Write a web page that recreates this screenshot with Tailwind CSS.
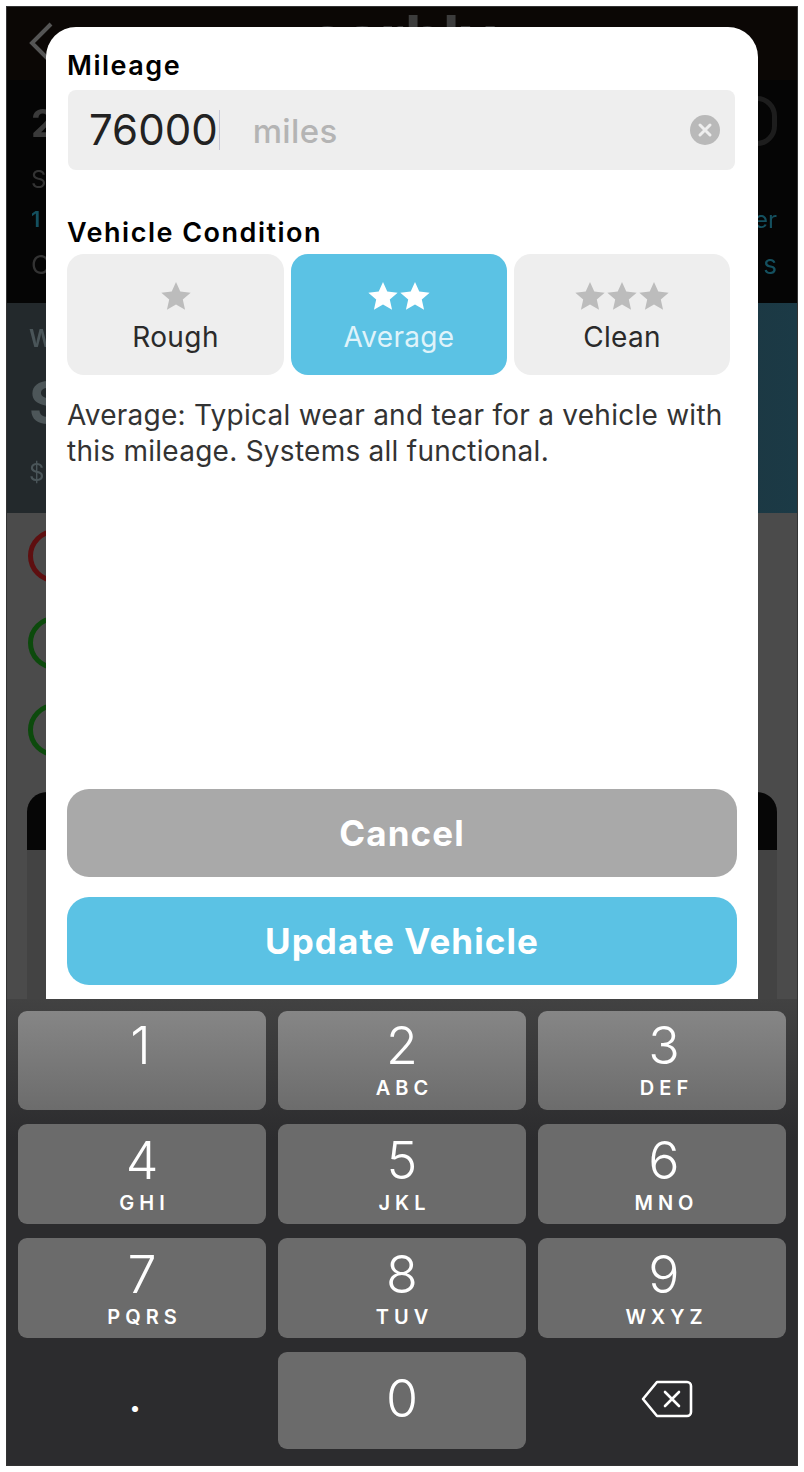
<!DOCTYPE html>
<html lang="en">
<head>
    <meta charset="UTF-8">
    <meta name="viewport" content="width=device-width, initial-scale=1.0">
    <title>Update Vehicle</title>
    <script src="https://cdn.jsdelivr.net/npm/@tailwindcss/browser@4"></script>
</head>
<body class="bg-white font-['Inter',sans-serif]">
<div class="p-[7px] h-[1472px] w-[804px]">
    <div class="relative w-[790px] h-[1458px] flex flex-col overflow-hidden outline outline-[#333] blur-[0.6px]">

        <!-- page behind the modal -->
        <div class="h-[73px] bg-[#0b0705] relative text-[#3c3c3c] overflow-hidden">
            <svg class="absolute left-[20px] top-[14px] w-[28px] h-[44px]" viewBox="0 0 28 44" fill="none" stroke="#555" stroke-width="4"><path d="M24 3 L5 22 L24 41"/></svg>
            <div class="absolute left-[302px] top-[0px] text-[60px] font-bold leading-[60px]">carbly</div>
        </div>
        <div class="h-[223px] bg-[#050505] relative overflow-hidden">
            <div class="absolute left-[24px] top-[24px] text-[38px] font-bold text-[#3a3a3a] leading-none">2</div>
            <div class="absolute left-[24px] top-[88px] text-[24px] text-[#333] leading-none">S</div>
            <div class="absolute left-[24px] top-[128px] text-[22px] text-[#14505f] font-semibold leading-none">1</div>
            <div class="absolute left-[24px] top-[172px] text-[26px] text-[#333] leading-none">C</div>
            <div class="absolute right-[20px] top-[128px] text-[24px] text-[#14505f] leading-none">er</div>
            <div class="absolute right-[20px] top-[172px] text-[26px] text-[#14505f] leading-none">s</div>
            <div class="absolute right-[20px] top-[16px] w-[40px] h-[50px] rounded-full border-[5px] border-[#1d1d1d]"></div>
        </div>
        <div class="h-[210px] bg-[linear-gradient(90deg,#23292c,#23292c_40%,#1b3a46)] relative overflow-hidden">
            <div class="absolute left-[22px] top-[24px] text-[24px] text-[#4a5559] font-semibold leading-none">W</div>
            <div class="absolute left-[22px] top-[72px] text-[56px] text-[#4d5659] font-bold leading-none">S</div>
            <div class="absolute left-[22px] top-[158px] text-[24px] text-[#4a5559] leading-none">$</div>
        </div>
        <div class="flex-1 bg-[#4b4b4b] relative">
            <div class="absolute left-[21px] top-[16px] w-[54px] h-[54px] rounded-full border-[5px] border-[#5e0f10]"></div>
            <div class="absolute left-[21px] top-[103px] w-[54px] h-[54px] rounded-full border-[5px] border-[#0c4a0c]"></div>
            <div class="absolute left-[21px] top-[190px] w-[54px] h-[54px] rounded-full border-[5px] border-[#0c4a0c]"></div>
            <div class="absolute left-[20px] right-[20px] top-[279px] h-[58px] bg-[#060606] rounded-t-[20px]"></div>
            <div class="absolute left-[20px] right-[20px] top-[337px] bottom-0 bg-[#434343]"></div>
        </div>

        <!-- keypad -->
        <div class="h-[466px] bg-[linear-gradient(180deg,#424242,#2c2c2e_30%)] pt-[12px] px-[11px] grid grid-cols-3 gap-x-[12px] gap-y-[14px] grid-rows-[99px_100px_100px_97px] text-white">
            <div class="rounded-[9px] bg-[linear-gradient(180deg,#868686,#6c6c6c)] flex flex-col items-center text-[52px] font-light leading-[64px] pt-[3px] pr-[3px]">1</div>
            <div class="rounded-[9px] bg-[linear-gradient(180deg,#868686,#6c6c6c)] flex flex-col items-center text-[52px] font-light leading-[64px] pt-[3px]">2<span class="text-[20px] font-semibold tracking-[5px] pl-[5px] leading-[20px]">ABC</span></div>
            <div class="rounded-[9px] bg-[linear-gradient(180deg,#868686,#6c6c6c)] flex flex-col items-center text-[52px] font-light leading-[64px] pt-[3px] pl-[4px]">3<span class="text-[20px] font-semibold tracking-[5px] pl-[5px] leading-[20px]">DEF</span></div>
            <div class="rounded-[9px] bg-[#6b6b6b] flex flex-col items-center text-[52px] font-light leading-[64px] pt-[5px]">4<span class="text-[20px] font-semibold tracking-[5px] pl-[5px] leading-[20px]">GHI</span></div>
            <div class="rounded-[9px] bg-[#6b6b6b] flex flex-col items-center text-[52px] font-light leading-[64px] pt-[5px]">5<span class="text-[20px] font-semibold tracking-[5px] pl-[5px] leading-[20px]">JKL</span></div>
            <div class="rounded-[9px] bg-[#6b6b6b] flex flex-col items-center text-[52px] font-light leading-[64px] pt-[5px] pl-[4px]">6<span class="text-[20px] font-semibold tracking-[5px] pl-[5px] leading-[20px]">MNO</span></div>
            <div class="rounded-[9px] bg-[#6b6b6b] flex flex-col items-center text-[52px] font-light leading-[64px] pt-[5px]">7<span class="text-[20px] font-semibold tracking-[5px] pl-[5px] leading-[20px]">PQRS</span></div>
            <div class="rounded-[9px] bg-[#6b6b6b] flex flex-col items-center text-[52px] font-light leading-[64px] pt-[5px]">8<span class="text-[20px] font-semibold tracking-[5px] pl-[5px] leading-[20px]">TUV</span></div>
            <div class="rounded-[9px] bg-[#6b6b6b] flex flex-col items-center text-[52px] font-light leading-[64px] pt-[5px] pl-[4px]">9<span class="text-[20px] font-semibold tracking-[5px] pl-[5px] leading-[20px]">WXYZ</span></div>
            <div class="flex items-center justify-center text-[36px] font-bold leading-none pb-[4px] pr-[14px]">.</div>
            <div class="rounded-[9px] bg-[#6b6b6b] flex items-center justify-center text-[52px] font-light leading-none pb-[3px]">0</div>
            <div class="flex items-center justify-center pb-[4px] pl-[10px]">
                <svg class="w-[52px] h-[38px]" viewBox="0 0 52 38" fill="none" stroke="#fff" stroke-width="2.6" stroke-linejoin="round" stroke-linecap="round"><path d="M16 2 H46 a4 4 0 0 1 4 4 V32 a4 4 0 0 1 -4 4 H16 L2 19 Z"/><path d="M24 12 L38 26 M38 12 L24 26"/></svg>
            </div>
        </div>

        <!-- modal -->
        <div class="absolute left-[39px] top-[20px] w-[712px] h-[972px] bg-white rounded-t-[30px] px-[21px] pt-[23px] pb-[14px] flex flex-col text-black">
            <div class="text-[27px] font-semibold leading-[32px] tracking-[1.5px]">Mileage</div>
            <div class="mt-[8px] h-[80px] w-[667px] ml-[1px] bg-[#eeeeee] rounded-[8px] flex items-center pl-[21px] pr-[15px]">
                <span class="text-[42px] leading-none text-[#222]">76000</span>
                <span class="ml-[1px] w-[1px] h-[40px] bg-[#c8c8d8]"></span>
                <span class="ml-[33px] pt-[2px] text-[33px] font-medium text-[#b4b4b4] leading-none tracking-[0.4px]">miles</span>
                <svg class="ml-auto w-[30px] h-[30px]" viewBox="0 0 30 30"><circle cx="15" cy="15" r="15" fill="#b9b9b9"/><path d="M10 10 L20 20 M20 10 L10 20" stroke="#eee" stroke-width="3" stroke-linecap="round"/></svg>
            </div>
            <div class="mt-[47px] text-[27px] font-semibold leading-[32px] tracking-[1.5px]">Vehicle Condition</div>
            <div class="mt-[5px] flex gap-[7px]">
                <div class="w-[217px] h-[121px] rounded-[17px] bg-[#eeeeee] flex flex-col items-center pt-[26px]">
                    <div class="flex h-[40px]">
                        <svg class="w-[32px] h-[32px]" viewBox="0 0 24 24" fill="#bcbcbc"><path d="M12 1.5l3.2 7.2 7.8.8-5.9 5.2 1.7 7.7-6.8-4-6.8 4 1.7-7.7L1 9.5l7.8-.8z"/></svg>
                    </div>
                    <div class="text-[28px] leading-[34px] text-[#2a2a2a] tracking-[0.4px]">Rough</div>
                </div>
                <div class="w-[216px] h-[121px] rounded-[17px] bg-[#5bc2e4] flex flex-col items-center pt-[26px]">
                    <div class="flex h-[40px]">
                        <svg class="w-[32px] h-[32px]" viewBox="0 0 24 24" fill="#fff"><path d="M12 1.5l3.2 7.2 7.8.8-5.9 5.2 1.7 7.7-6.8-4-6.8 4 1.7-7.7L1 9.5l7.8-.8z"/></svg>
                        <svg class="w-[32px] h-[32px]" viewBox="0 0 24 24" fill="#fff"><path d="M12 1.5l3.2 7.2 7.8.8-5.9 5.2 1.7 7.7-6.8-4-6.8 4 1.7-7.7L1 9.5l7.8-.8z"/></svg>
                    </div>
                    <div class="text-[28px] leading-[34px] text-[#dff3fa] tracking-[0.3px]">Average</div>
                </div>
                <div class="w-[216px] h-[121px] rounded-[17px] bg-[#eeeeee] flex flex-col items-center pt-[26px]">
                    <div class="flex h-[40px]">
                        <svg class="w-[32px] h-[32px]" viewBox="0 0 24 24" fill="#bcbcbc"><path d="M12 1.5l3.2 7.2 7.8.8-5.9 5.2 1.7 7.7-6.8-4-6.8 4 1.7-7.7L1 9.5l7.8-.8z"/></svg>
                        <svg class="w-[32px] h-[32px]" viewBox="0 0 24 24" fill="#bcbcbc"><path d="M12 1.5l3.2 7.2 7.8.8-5.9 5.2 1.7 7.7-6.8-4-6.8 4 1.7-7.7L1 9.5l7.8-.8z"/></svg>
                        <svg class="w-[32px] h-[32px]" viewBox="0 0 24 24" fill="#bcbcbc"><path d="M12 1.5l3.2 7.2 7.8.8-5.9 5.2 1.7 7.7-6.8-4-6.8 4 1.7-7.7L1 9.5l7.8-.8z"/></svg>
                    </div>
                    <div class="text-[28px] leading-[34px] text-[#2a2a2a] tracking-[0.3px]">Clean</div>
                </div>
            </div>
            <p class="mt-[22px] text-[28px] leading-[36px] text-[#333] tracking-[0.26px]">Average: Typical wear and tear for a vehicle with<br>this mileage. Systems all functional.</p>
            <div class="mt-auto h-[88px] w-[670px] rounded-[22px] bg-[#a9a9a9] flex items-center justify-center text-white text-[35px] font-bold tracking-[1.1px]">Cancel</div>
            <div class="mt-[20px] h-[88px] w-[670px] rounded-[22px] bg-[#5bc2e4] flex items-center justify-center text-white text-[35px] font-bold tracking-[1.1px]">Update Vehicle</div>
        </div>
    </div>
</div>
</body>
</html>
